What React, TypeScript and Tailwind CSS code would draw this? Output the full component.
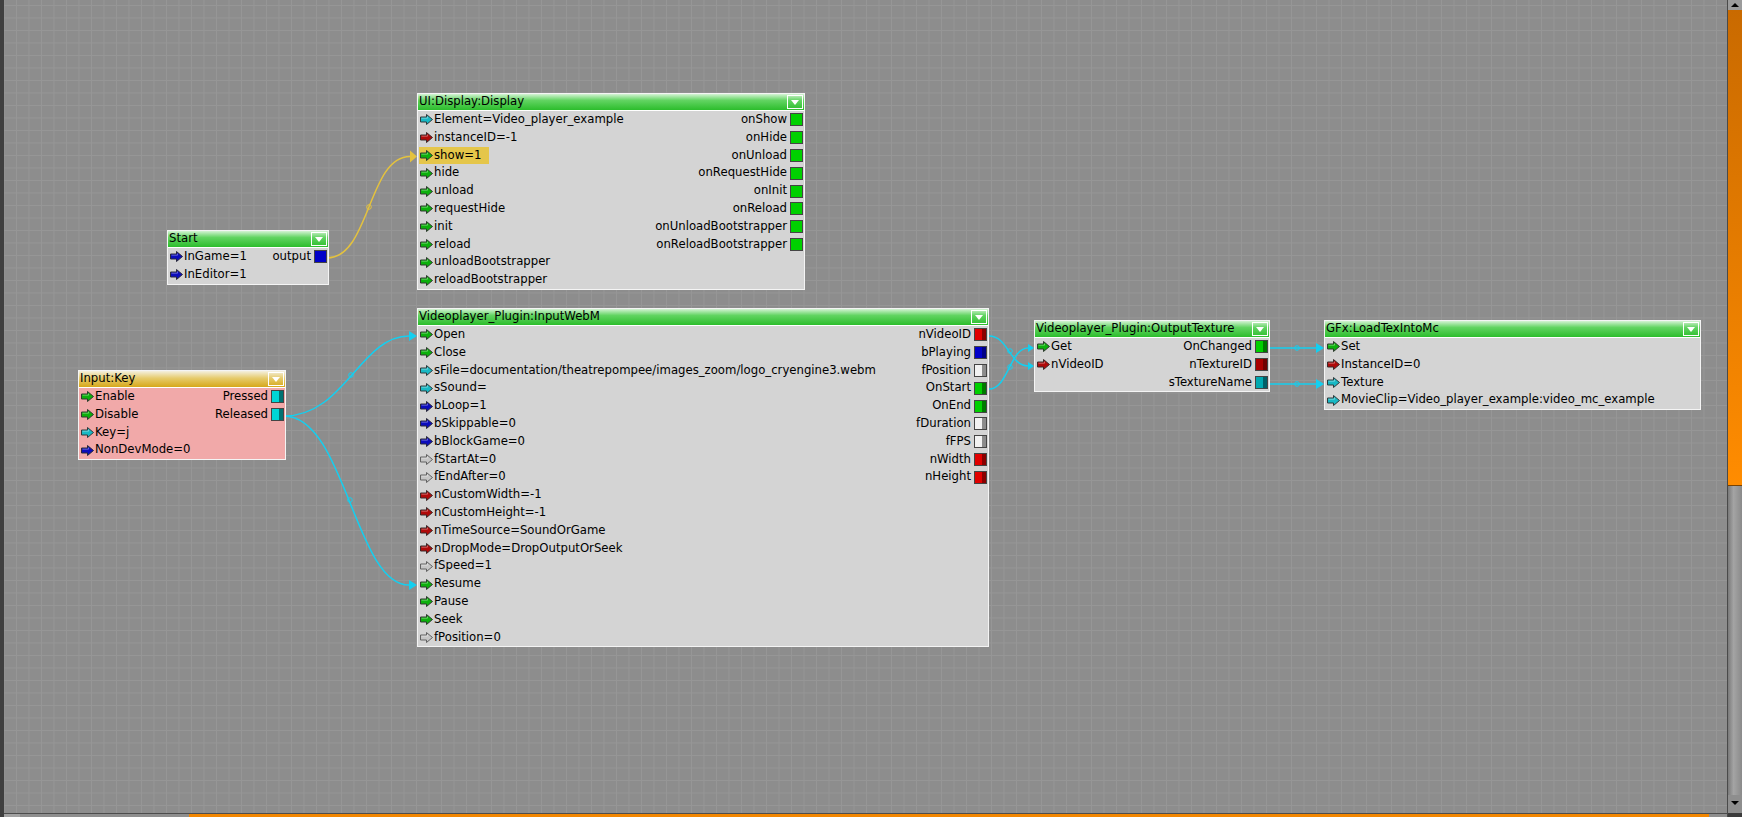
import React from "react"

type Kind = "green" | "cyan" | "red" | "blue" | "gray"
type PortColor = "green" | "cyan" | "teal" | "red" | "darkred" | "blue" | "white"

type InPin = { label: string; kind: Kind; active?: boolean }
type OutPin = { label: string; color: PortColor; split?: boolean }

const arrowClass: Record<Kind, string> = {
  green: "fill-[#0cb00c] stroke-[#2f3a2f]",
  cyan: "fill-[#18b8c4] stroke-[#2f3a3c]",
  red: "fill-[#b00a0a] stroke-[#3a2a2a]",
  blue: "fill-[#0c0cbc] stroke-[#2a2a3a]",
  gray: "fill-[#c6c6c6] stroke-[#626262]",
}

const portClass: Record<PortColor, { main: string; dark: string }> = {
  green: { main: "bg-[#00d000]", dark: "bg-[#007a00]" },
  cyan: { main: "bg-[#00d6d6]", dark: "bg-[#007272]" },
  teal: { main: "bg-[#00a8b0]", dark: "bg-[#006068]" },
  red: { main: "bg-[#e00000]", dark: "bg-[#8a0000]" },
  darkred: { main: "bg-[#a80000]", dark: "bg-[#700000]" },
  blue: { main: "bg-[#0000c8]", dark: "bg-[#000086]" },
  white: { main: "bg-[#f2f2f2]", dark: "bg-[#8c8c8c]" },
}

function PinArrow({ kind }: { kind: Kind }) {
  return (
    <svg width="13" height="11" viewBox="0 0 13 11" className="ml-[1px] shrink-0">
      <polygon
        points="0.5,3 6.5,3 6.5,0.5 12.5,5.5 6.5,10.5 6.5,8 0.5,8"
        className={arrowClass[kind]}
        strokeWidth="1"
      />
      <polyline
        points="1.5,4.2 7.5,4.2 7.5,2.6"
        fill="none"
        stroke="#ffffff"
        strokeOpacity="0.35"
        strokeWidth="1"
      />
    </svg>
  )
}

function Port({ color, split }: { color: PortColor; split?: boolean }) {
  const c = portClass[color]
  return (
    <span className="ml-[3px] mr-[1px] flex h-[13px] w-[13px] shrink-0 border border-[#444444]">
      <span className={`flex-1 ${c.main}`} />
      {split && <span className={`w-[4px] ${c.dark}`} />}
    </span>
  )
}

function FlowNode({
  title,
  className,
  tone = "green",
  pink = false,
  inputs,
  outputs = [],
}: {
  title: string
  className: string
  tone?: "green" | "gold"
  pink?: boolean
  inputs: InPin[]
  outputs?: OutPin[]
}) {
  const count = Math.max(inputs.length, outputs.length)
  const rows = Array.from({ length: count }, (_, i) => ({
    pin: inputs[i],
    port: outputs[i],
  }))

  return (
    <div
      className={`absolute border border-[#f4f4f4] ${
        pink ? "bg-[#f1a9a9]" : "bg-[#d4d4d4]"
      } ${className}`}
    >
      <div
        className={`flex h-[17px] items-center justify-between border-b border-white px-[1px] ${
          tone === "gold"
            ? "bg-[linear-gradient(to_bottom,#f4f0e0_0%,#e6cb6c_45%,#d6a81a_100%)]"
            : "bg-[linear-gradient(to_bottom,#d4f3d4_0%,#62d462_40%,#2cbd2c_100%)]"
        }`}
      >
        <span className="whitespace-nowrap">{title}</span>
        <span className="flex h-[14px] w-[16px] items-center justify-center border border-white">
          <span className="h-0 w-0 border-x-[4px] border-t-[5px] border-x-transparent border-t-white" />
        </span>
      </div>
      {rows.map((row, i) => (
        <div key={i} className="flex h-[17.8px] items-center justify-between">
          {row.pin ? (
            <span
              className={`ml-[1px] flex items-center self-stretch whitespace-nowrap ${
                row.pin.active ? "bg-[#e5c64a] pr-[8px]" : ""
              }`}
            >
              <PinArrow kind={row.pin.kind} />
              <span className="ml-[1px]">{row.pin.label}</span>
            </span>
          ) : (
            <span />
          )}
          {row.port && (
            <span className="flex items-center whitespace-nowrap">
              <span>{row.port.label}</span>
              <Port color={row.port.color} split={row.port.split} />
            </span>
          )}
        </div>
      ))}
    </div>
  )
}

function Links() {
  const cyan = "#14cff0"
  const yellow = "#e4c23e"
  return (
    <svg
      className="pointer-events-none absolute left-0 top-0"
      width="1723"
      height="813"
      viewBox="0 0 1723 813"
    >
      <g transform="translate(-4,0)" fill="none" strokeWidth="1.5">
        <path d="M327,258 C370,258 368,156.5 410,156.5" stroke={yellow} />
        <circle cx="369" cy="207" r="2.3" stroke={yellow} strokeWidth="1" />
        <polygon points="410,150.5 417,156.5 410,162.5" fill={yellow} stroke="none" />

        <path d="M284,416 C345,416 360,336 409,336" stroke={cyan} />
        <circle cx="351" cy="375" r="2.3" stroke={cyan} strokeWidth="1" />
        <polygon points="409,331 417,336 409,341" fill={cyan} stroke="none" />

        <path d="M284,416 C345,416 355,585 409,585" stroke={cyan} />
        <circle cx="350" cy="500" r="2.3" stroke={cyan} strokeWidth="1" />
        <polygon points="409,580 417,585 409,590" fill={cyan} stroke="none" />

        <path d="M989,336 C1008,336 1010,366 1028,366" stroke={cyan} />
        <circle cx="1010" cy="351" r="2.3" stroke={cyan} strokeWidth="1" />
        <polygon points="1028,362 1034,366 1028,370" fill={cyan} stroke="none" />

        <path d="M989,389 C1008,389 1010,348 1028,348" stroke={cyan} />
        <circle cx="1010" cy="367" r="2.3" stroke={cyan} strokeWidth="1" />
        <polygon points="1028,344 1034,348 1028,352" fill={cyan} stroke="none" />

        <path d="M1270,348 L1316,348" stroke={cyan} />
        <circle cx="1297" cy="348" r="2.3" stroke={cyan} strokeWidth="1" />
        <polygon points="1316,343 1324,348 1316,353" fill={cyan} stroke="none" />

        <path d="M1270,384 L1316,384" stroke={cyan} />
        <circle cx="1297" cy="384" r="2.3" stroke={cyan} strokeWidth="1" />
        <polygon points="1316,379 1324,384 1316,389" fill={cyan} stroke="none" />
      </g>
    </svg>
  )
}

export default function App() {
  return (
    <div className="flex h-[817px] w-[1742px] overflow-hidden bg-[#8c8c8c] font-['DejaVu_Sans',sans-serif] text-[11.7px] leading-none text-black">
      <div className="w-[4px] shrink-0 bg-[#3f3f3f]" />

      <div className="flex min-w-0 flex-1 flex-col">
        <div className="relative flex-1 bg-[#8d8d8d] bg-[linear-gradient(to_right,#969696_1px,transparent_1px),linear-gradient(to_bottom,#969696_1px,transparent_1px)] bg-[size:12.5px_12.5px] bg-[position:12px_5px]">
          <Links />

          <FlowNode
            title="UI:Display:Display"
            className="left-[413px] top-[93px] w-[388px]"
            inputs={[
              { label: "Element=Video_player_example", kind: "cyan" },
              { label: "instanceID=-1", kind: "red" },
              { label: "show=1", kind: "green", active: true },
              { label: "hide", kind: "green" },
              { label: "unload", kind: "green" },
              { label: "requestHide", kind: "green" },
              { label: "init", kind: "green" },
              { label: "reload", kind: "green" },
              { label: "unloadBootstrapper", kind: "green" },
              { label: "reloadBootstrapper", kind: "green" },
            ]}
            outputs={[
              { label: "onShow", color: "green" },
              { label: "onHide", color: "green" },
              { label: "onUnload", color: "green" },
              { label: "onRequestHide", color: "green" },
              { label: "onInit", color: "green" },
              { label: "onReload", color: "green" },
              { label: "onUnloadBootstrapper", color: "green" },
              { label: "onReloadBootstrapper", color: "green" },
            ]}
          />

          <FlowNode
            title="Start"
            className="left-[163px] top-[230px] w-[162px]"
            inputs={[
              { label: "InGame=1", kind: "blue" },
              { label: "InEditor=1", kind: "blue" },
            ]}
            outputs={[{ label: "output", color: "blue" }]}
          />

          <FlowNode
            title="Input:Key"
            tone="gold"
            pink
            className="left-[74px] top-[370px] w-[208px]"
            inputs={[
              { label: "Enable", kind: "green" },
              { label: "Disable", kind: "green" },
              { label: "Key=j", kind: "cyan" },
              { label: "NonDevMode=0", kind: "blue" },
            ]}
            outputs={[
              { label: "Pressed", color: "cyan", split: true },
              { label: "Released", color: "cyan", split: true },
            ]}
          />

          <FlowNode
            title="Videoplayer_Plugin:InputWebM"
            className="left-[413px] top-[308px] w-[572px]"
            inputs={[
              { label: "Open", kind: "green" },
              { label: "Close", kind: "green" },
              {
                label:
                  "sFile=documentation/theatrepompee/images_zoom/logo_cryengine3.webm",
                kind: "cyan",
              },
              { label: "sSound=", kind: "cyan" },
              { label: "bLoop=1", kind: "blue" },
              { label: "bSkippable=0", kind: "blue" },
              { label: "bBlockGame=0", kind: "blue" },
              { label: "fStartAt=0", kind: "gray" },
              { label: "fEndAfter=0", kind: "gray" },
              { label: "nCustomWidth=-1", kind: "red" },
              { label: "nCustomHeight=-1", kind: "red" },
              { label: "nTimeSource=SoundOrGame", kind: "red" },
              { label: "nDropMode=DropOutputOrSeek", kind: "red" },
              { label: "fSpeed=1", kind: "gray" },
              { label: "Resume", kind: "green" },
              { label: "Pause", kind: "green" },
              { label: "Seek", kind: "green" },
              { label: "fPosition=0", kind: "gray" },
            ]}
            outputs={[
              { label: "nVideoID", color: "red", split: true },
              { label: "bPlaying", color: "blue", split: true },
              { label: "fPosition", color: "white", split: true },
              { label: "OnStart", color: "green", split: true },
              { label: "OnEnd", color: "green", split: true },
              { label: "fDuration", color: "white", split: true },
              { label: "fFPS", color: "white", split: true },
              { label: "nWidth", color: "red", split: true },
              { label: "nHeight", color: "red", split: true },
            ]}
          />

          <FlowNode
            title="Videoplayer_Plugin:OutputTexture"
            className="left-[1030px] top-[320px] w-[236px]"
            inputs={[
              { label: "Get", kind: "green" },
              { label: "nVideoID", kind: "red" },
            ]}
            outputs={[
              { label: "OnChanged", color: "green", split: true },
              { label: "nTextureID", color: "darkred", split: true },
              { label: "sTextureName", color: "teal", split: true },
            ]}
          />

          <FlowNode
            title="GFx:LoadTexIntoMc"
            className="left-[1320px] top-[320px] w-[377px]"
            inputs={[
              { label: "Set", kind: "green" },
              { label: "InstanceID=0", kind: "red" },
              { label: "Texture", kind: "cyan" },
              { label: "MovieClip=Video_player_example:video_mc_example", kind: "cyan" },
            ]}
          />
        </div>

        <div className="flex h-[4px] shrink-0 border-t border-[#4c4c4c]">
          <div className="w-[16px] bg-[#a2a2a2]" />
          <div className="w-[169px] bg-[#8e8e8e]" />
          <div className="flex-1 bg-[#f28600]" />
          <div className="w-[18px] bg-[#8e8e8e]" />
        </div>
      </div>

      <div className="flex w-[15px] shrink-0 flex-col border-l border-[#4a4a4a] bg-[#8a8a8a]">
        <div className="flex h-[10px] justify-center bg-[#9c9c9c] pt-[3px]">
          <span className="h-0 w-0 border-x-[4px] border-b-[4px] border-x-transparent border-b-black" />
        </div>
        <div className="h-[476px] border-b border-[#7a4200] bg-[linear-gradient(to_bottom,#c96a00,#ff8c00)]" />
        <div className="flex-1 bg-[linear-gradient(to_right,#7a7a7a,#a4a4a4_40%,#8a8a8a)]" />
        <div className="flex h-[18px] justify-center bg-[#8e8e8e] pt-[6px]">
          <span className="h-0 w-0 border-x-[4px] border-t-[4px] border-x-transparent border-t-black" />
        </div>
        <div className="h-[4px] bg-[#3c3c3c]" />
      </div>
    </div>
  )
}
